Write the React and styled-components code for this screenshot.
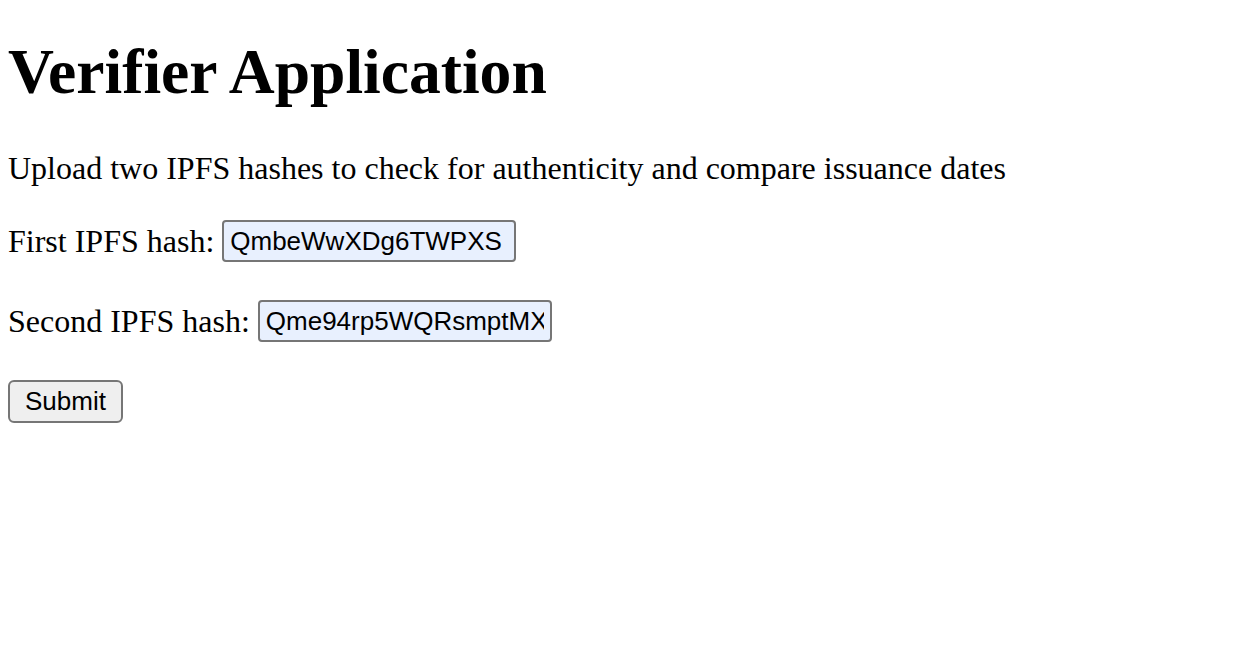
import React from "react";
import styled, { createGlobalStyle } from "styled-components";

const GlobalStyle = createGlobalStyle`
  html, body { margin: 0; padding: 0; background: #ffffff; }
  body { font-family: "Liberation Serif", "Times New Roman", serif; color: #000; }
`;

const Page = styled.main`
  padding: 0 8px;
`;

const Title = styled.h1`
  margin: 37px 0 0;
  font-size: 63.6px;
  font-weight: 700;
  line-height: 70px;
`;

const Intro = styled.p`
  margin: 43px 0 0;
  font-size: 32px;
  line-height: 36px;
`;

const Form = styled.form`
  display: flex;
  flex-direction: column;
  align-items: flex-start;
  gap: 38px;
  margin-top: 34px;
`;

const Field = styled.label`
  display: flex;
  align-items: center;
  gap: 8px;
  font-size: 32px;
  line-height: 36px;
`;

const HashInput = styled.input`
  box-sizing: border-box;
  width: 294px;
  height: 42px;
  padding: 0 6px;
  border: 2px solid #767676;
  border-radius: 4px;
  background: #e8f0fe;
  font-family: "Liberation Sans", Arial, sans-serif;
  font-size: 26px;
  color: #000;
  outline: none;
`;

const SubmitButton = styled.button`
  box-sizing: border-box;
  height: 43px;
  padding: 0 15px;
  border: 2px solid #767676;
  border-radius: 6px;
  background: #efefef;
  font-family: "Liberation Sans", Arial, sans-serif;
  font-size: 26px;
  color: #000;
`;

export default function App() {
  return (
    <>
      <GlobalStyle />
      <Page>
        <Title>Verifier Application</Title>
        <Intro>Upload two IPFS hashes to check for authenticity and compare issuance dates</Intro>
        <Form onSubmit={(e) => e.preventDefault()}>
          <Field>
            First IPFS hash:
            <HashInput defaultValue="QmbeWwXDg6TWPXS" />
          </Field>
          <Field>
            Second IPFS hash:
            <HashInput defaultValue="Qme94rp5WQRsmptMXYZ" />
          </Field>
          <SubmitButton type="submit">Submit</SubmitButton>
        </Form>
      </Page>
    </>
  );
}
